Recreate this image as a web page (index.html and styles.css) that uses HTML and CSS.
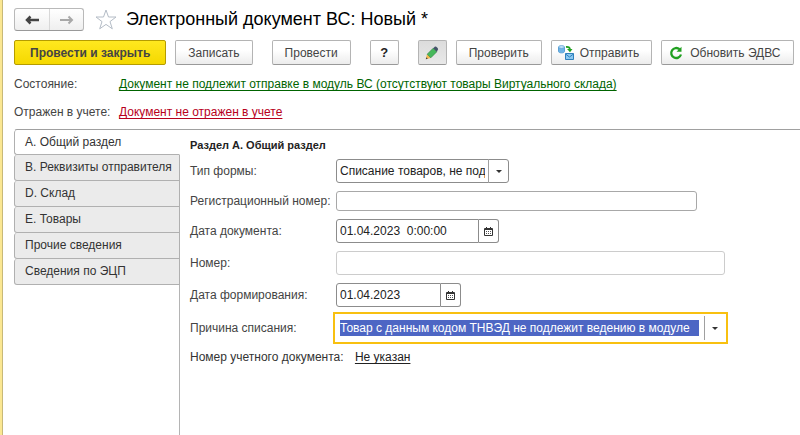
FILE: index.html
```html
<!DOCTYPE html>
<html lang="ru">
<head>
    <meta charset="UTF-8">
    <meta name="viewport" content="width=device-width, initial-scale=1.0">
    <title>Электронный документ ВС: Новый *</title>
    <link rel="stylesheet" href="styles.css">
</head>
<body>
    <header class="header">
        <div class="history">
            <button type="button" aria-label="Назад">
                <svg width="14" height="10" viewBox="0 0 14 10"><path d="M14 5H3M5.500 1.500L2 5l3.500 3.500" fill="none" stroke="#444" stroke-width="2.500"/></svg>
            </button>
            <button type="button" class="forward" aria-label="Вперед">
                <svg width="14" height="10" viewBox="0 0 14 10"><path d="M0 5h11M8.500 1.500L12 5 8.500 8.500" fill="none" stroke="#a8a8a8" stroke-width="2"/></svg>
            </button>
        </div>
        <button type="button" class="star" aria-label="В избранное">
            <svg width="22" height="21" viewBox="0 0 22 21"><path d="M11 1l2.500 7H21l-6 4.600 2.300 7.200L11 15.400l-6.300 4.400L7 12.600 1 8h7.500z" fill="#fff" stroke="#b4bcc6" stroke-width="1"/></svg>
        </button>
        <h1>Электронный документ ВС: Новый *</h1>
    </header>

    <div class="toolbar">
        <button type="button" class="btn primary">Провести и закрыть</button>
        <button type="button" class="btn">Записать</button>
        <button type="button" class="btn post">Провести</button>
        <button type="button" class="btn square help">?</button>
        <button type="button" class="btn square pressed" aria-label="Редактировать">
            <svg width="14" height="14" viewBox="0 0 14 14">
                <path d="M.8 13.200l1.200-5L5.800 12z" fill="#f2b84b"/>
                <path d="M.8 13.200l.5-2 1.500 1.500z" fill="#444"/>
                <path d="M2.200 8.200l6-6L11.800 5.800l-6 6z" fill="#45b85a" stroke="#2c7c3a" stroke-width=".6"/>
                <path d="M8.200 2.200L10 .5c1-.6 3.500 1.700 3 3L11.800 5.800z" fill="#44546a"/>
            </svg>
        </button>
        <button type="button" class="btn">Проверить</button>
        <button type="button" class="btn with-icon">
            <svg width="16" height="16" viewBox="0 0 16 16">
                <path d="M.5 2v4.500c0 1.800 6 1.800 6 0V2" fill="#6db3e6" stroke="#5aa0d4"/>
                <ellipse cx="3.500" cy="2" rx="3" ry="1.400" fill="#c5e4fa" stroke="#5aa0d4" stroke-width=".8"/>
                <path d="M8 2c3-.3 4 .8 4 3" fill="none" stroke="#22a022" stroke-width="1.800"/>
                <path d="M9 4h5.500L12 7.300z" fill="#22a022"/>
                <path d="M7.500 8.500h8v6h-8z" fill="#8cc8f0" stroke="#2f80bd"/>
                <path d="M7.500 9l4 3 4-3" fill="none" stroke="#2f80bd"/>
            </svg>
            Отправить
        </button>
        <button type="button" class="btn with-icon">
            <svg width="16" height="14" viewBox="0 0 16 14">
                <path d="M11.500 3.200A5 5 0 1 0 13 8.500" fill="none" stroke="#21a021" stroke-width="2.300"/>
                <path d="M13.500.8v5h-5z" fill="#21a021"/>
            </svg>
            Обновить ЭДВС
        </button>
    </div>

    <dl class="status">
        <dt>Состояние:</dt>
        <dd><a href="#" class="ok">Документ не подлежит отправке в модуль ВС (отсутствуют товары Виртуального склада)</a></dd>
        <dt>Отражен в учете:</dt>
        <dd><a href="#" class="bad">Документ не отражен в учете</a></dd>
    </dl>

    <main class="content">
        <nav class="tabs">
            <a href="#" class="active">A. Общий раздел</a>
            <a href="#">B. Реквизиты отправителя</a>
            <a href="#">D. Склад</a>
            <a href="#">E. Товары</a>
            <a href="#">Прочие сведения</a>
            <a href="#">Сведения по ЭЦП</a>
        </nav>

        <form class="panel">
            <h2>Раздел A. Общий раздел</h2>

            <div class="fields">
                <label for="form-type">Тип формы:</label>
                <div class="combo type">
                    <select id="form-type">
                        <option>Списание товаров, не подлежащих ведению</option>
                    </select>
                    <span class="arrow"></span>
                </div>

                <label for="reg-number">Регистрационный номер:</label>
                <input type="text" id="reg-number" class="reg">

                <label for="doc-date">Дата документа:</label>
                <div class="date">
                    <input type="text" id="doc-date" class="datetime" value="01.04.2023&nbsp; 0:00:00">
                    <button type="button" aria-label="Выбрать дату">
                        <svg width="9" height="9" viewBox="0 0 9 9"><path d="M.5 1.500h8v7h-8zM.5 2.500h8M2.500 0v2M6.500 0v2" fill="none" stroke="#333"/><path d="M2 4.500h5M2 6.500h5" stroke="#555" stroke-dasharray="1 1"/></svg>
                    </button>
                </div>

                <label for="number">Номер:</label>
                <input type="text" id="number" class="number" readonly>

                <label for="form-date">Дата формирования:</label>
                <div class="date">
                    <input type="text" id="form-date" class="day" value="01.04.2023">
                    <button type="button" aria-label="Выбрать дату">
                        <svg width="9" height="9" viewBox="0 0 9 9"><path d="M.5 1.500h8v7h-8zM.5 2.500h8M2.500 0v2M6.500 0v2" fill="none" stroke="#333"/><path d="M2 4.500h5M2 6.500h5" stroke="#555" stroke-dasharray="1 1"/></svg>
                    </button>
                </div>

                <label for="reason">Причина списания:</label>
                <div class="combo reason">
                    <select id="reason">
                        <option>Товар с данным кодом ТНВЭД не подлежит ведению в модуле</option>
                    </select>
                    <span class="arrow"></span>
                </div>
            </div>

            <p class="account">Номер учетного документа: <a href="#">Не указан</a></p>
        </form>
    </main>
</body>
</html>
```
FILE: styles.css
```css
* {
    box-sizing: border-box;
}

body {
    display: flex;
    flex-direction: column;
    min-height: 100vh;
    margin: 0;
    padding: 8px 0 0 12px;
    border-left: 2px solid #fbe792;
    box-shadow: inset 1px 0 0 #c8b978;
    background: #fff;
    color: #444;
    font: 12px/16px "Liberation Sans", Arial, sans-serif;
}

button, input, select {
    margin: 0;
    font: inherit;
    color: inherit;
}

button {
    padding: 0;
    cursor: pointer;
}

/* Header */
.header {
    display: flex;
    align-items: center;
    height: 23px;
}

.history {
    display: flex;
    height: 23px;
    border: 1px solid #b9b9b9;
    border-bottom-color: #999;
    border-radius: 3px;
    background: linear-gradient(#fff, #efefef);
}

.history button {
    display: flex;
    align-items: center;
    justify-content: center;
    width: 34px;
    border: none;
    background: none;
}

.history .forward {
    border-left: 1px solid #d8d8d8;
}

.star {
    display: flex;
    margin-left: 11px;
    border: none;
    background: none;
}

h1 {
    margin: 0 0 0 9px;
    color: #000;
    font-size: 18px;
    font-weight: normal;
    line-height: 23px;
    white-space: nowrap;
}

/* Toolbar */
.toolbar {
    display: flex;
    gap: 9px;
    margin-top: 9px;
}

.btn {
    flex-shrink: 0;
    height: 25px;
    padding: 0 12px;
    border: 1px solid #b4b4b4;
    border-bottom-color: #999;
    border-radius: 2px;
    background: linear-gradient(#fff 40%, #ececec);
    white-space: nowrap;
}

.primary {
    padding: 0 15px;
    border-color: #b59c00;
    background: linear-gradient(#ffe81f, #f5d800);
    color: #444;
    font-weight: bold;
}

.post, .help, .pressed {
    margin-left: 10px;
}

.square {
    display: flex;
    align-items: center;
    justify-content: center;
    width: 29px;
    padding: 0;
}

.help {
    color: #222;
    font-size: 13px;
    font-weight: bold;
}

.pressed {
    background: linear-gradient(#dcdcdc, #e8e8e8);
}

.with-icon {
    display: flex;
    align-items: center;
    gap: 6px;
    padding: 0 12px 0 6px;
}

/* Status */
.status {
    display: grid;
    grid-template-columns: 105px 1fr;
    row-gap: 12px;
    margin: 11px 0 9px;
    white-space: nowrap;
}

.status dd {
    margin: 0;
}

.status a {
    text-underline-offset: 2px;
}

.ok {
    color: #006400;
}

.bad {
    color: #b8001c;
}

/* Sections */
.content {
    display: flex;
    flex: 1;
    border-top: 1px solid #a0a0a0;
    border-left: 1px solid transparent;
    border-top-left-radius: 3px;
}

.tabs {
    display: flex;
    flex-direction: column;
    width: 166px;
    margin-left: -1px;
}

.tabs::after {
    content: "";
    flex: 1;
    border-right: 1px solid #b4b4b4;
}

.tabs a {
    height: 26px;
    padding-left: 10px;
    border: 1px solid #b0b0b0;
    border-top: none;
    border-radius: 3px 0 0 3px;
    background: #ebebeb;
    color: #333;
    line-height: 25px;
    text-decoration: none;
    white-space: nowrap;
}

.tabs .active {
    height: 25px;
    border-right-color: transparent;
    background: #fff;
}

.panel {
    flex: 1;
    padding: 7px 10px;
}

h2 {
    margin: 0 0 6px;
    color: #222;
    font-size: 11px;
    line-height: 16px;
}

.fields {
    display: grid;
    grid-template-columns: 146px 1fr;
    row-gap: 8px;
    align-items: center;
    justify-items: start;
    white-space: nowrap;
}

.fields input, .combo select {
    height: 24px;
    padding: 0 3px;
    border: 1px solid #8c8c8c;
    border-radius: 3px;
    outline: none;
    background: #fff;
    color: #222;
}

.fields .reg {
    width: 361px;
    height: 20px;
    border-color: #a8a8a8;
}

.fields .number {
    width: 389px;
    border-color: #ccc;
}

.date {
    display: flex;
}

.date input {
    border-radius: 3px 0 0 3px;
}

.date .datetime {
    width: 143px;
}

.date .day {
    width: 105px;
}

.date button {
    display: flex;
    align-items: center;
    justify-content: center;
    width: 20px;
    border: 1px solid #8c8c8c;
    border-left: none;
    border-radius: 0 3px 3px 0;
    background: #fff;
}

.combo {
    position: relative;
}

.combo select {
    width: 100%;
    padding-right: 23px;
    appearance: none;
}

/* Drop-down mark over the right end of the select */
.arrow {
    position: absolute;
    top: 0;
    right: 0;
    bottom: 0;
    display: flex;
    align-items: center;
    justify-content: center;
    width: 21px;
    border-left: 1px solid #a0a0a0;
    pointer-events: none;
}

.arrow::before {
    content: "";
    border: 3px solid transparent;
    border-top-color: #333;
    border-bottom: none;
}

.type {
    width: 173px;
}

.reason {
    width: 395px;
    margin: -3px;
    border: 2px solid #f8c010;
    padding: 3px;
}

.combo.reason select {
    height: 22px;
    padding: 3px 24px 3px 2px;
    border: none;
    border-radius: 0;
    background: #4d66c4 content-box;
    color: #fff;
}

.reason .arrow {
    top: 2px;
    bottom: 2px;
    right: 1px;
}

.account {
    margin: 8px 0 0;
    color: #333;
}

.account a {
    margin-left: 8px;
    color: #222;
    text-underline-offset: 2px;
}
```
